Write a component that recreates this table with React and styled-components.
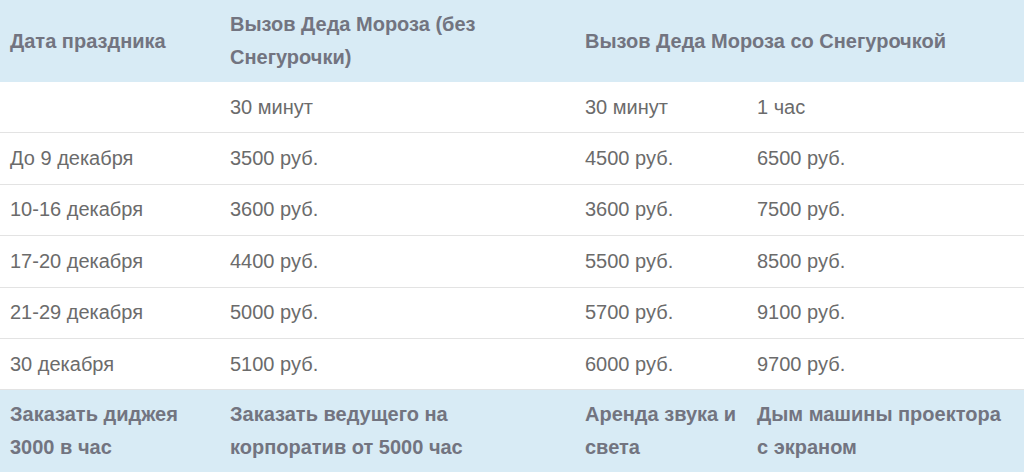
import React from "react";
import styled, { createGlobalStyle } from "styled-components";

const Global = createGlobalStyle`
  html, body { margin: 0; padding: 0; background: #fff; }
  body { font-family: "Liberation Sans", Arial, sans-serif; }
`;

const Table = styled.table`
  width: 1024px;
  border-collapse: collapse;
  table-layout: fixed;
  font-size: 20px;
  line-height: 33px;
  color: #6b6b6b;
`;

const HeadRow = styled.tr`
  background: #d8ebf5;
`;

const Row = styled.tr`
  border-bottom: 1px solid #e3e3e3;
`;

const Th = styled.th`
  text-align: left;
  font-weight: bold;
  color: #727480;
  padding: 8px 10px;
  vertical-align: middle;
`;

const Td = styled.td`
  padding: 8.7px 10px;
  vertical-align: middle;
`;

const rows = [
  ["До 9 декабря", "3500 руб.", "4500 руб.", "6500 руб."],
  ["10-16 декабря", "3600 руб.", "3600 руб.", "7500 руб."],
  ["17-20 декабря", "4400 руб.", "5500 руб.", "8500 руб."],
  ["21-29 декабря", "5000 руб.", "5700 руб.", "9100 руб."],
  ["30 декабря", "5100 руб.", "6000 руб.", "9700 руб."],
];

export default function App() {
  return (
    <>
      <Global />
      <Table>
        <colgroup>
          <col style={{ width: 220 }} />
          <col style={{ width: 355 }} />
          <col style={{ width: 172 }} />
          <col style={{ width: 277 }} />
        </colgroup>
        <thead>
          <HeadRow>
            <Th>Дата праздника</Th>
            <Th>Вызов Деда Мороза (без Снегурочки)</Th>
            <Th colSpan={2}>Вызов Деда Мороза со Снегурочкой</Th>
          </HeadRow>
        </thead>
        <tbody>
          <Row>
            <Td></Td>
            <Td>30 минут</Td>
            <Td>30 минут</Td>
            <Td>1 час</Td>
          </Row>
          {rows.map((r) => (
            <Row key={r[0]}>
              {r.map((c, i) => (
                <Td key={i}>{c}</Td>
              ))}
            </Row>
          ))}
          <HeadRow>
            <Th>Заказать диджея 3000 в час</Th>
            <Th>Заказать ведущего на корпоратив от 5000 час</Th>
            <Th>Аренда звука и света</Th>
            <Th>Дым машины проектора с экраном</Th>
          </HeadRow>
        </tbody>
      </Table>
    </>
  );
}
